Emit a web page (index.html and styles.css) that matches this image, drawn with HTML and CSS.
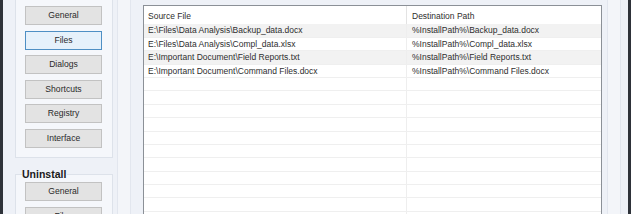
FILE: index.html
```html
<!DOCTYPE html>
<html>
<head>
<meta charset="utf-8">
<link rel="stylesheet" href="styles.css">
</head>
<body>
<div class="frame">
  <div class="edge"></div>
  <aside class="sidebar">
    <div class="group group-top">
      <button class="btn">General</button>
      <button class="btn btn-active">Files</button>
      <button class="btn">Dialogs</button>
      <button class="btn">Shortcuts</button>
      <button class="btn">Registry</button>
      <button class="btn">Interface</button>
    </div>
    <fieldset class="group group-uninstall">
      <legend class="group-title">Uninstall</legend>
      <div class="btns">
        <button class="btn">General</button>
        <button class="btn">Files</button>
      </div>
    </fieldset>
  </aside>
  <div class="gutter"></div>
  <main class="content">
    <div class="list">
      <div class="row head">
        <div class="cell c1">Source File</div>
        <div class="cell c2">Destination Path</div>
      </div>
      <div class="row alt">
        <div class="cell c1">E:\Files\Data Analysis\Backup_data.docx</div>
        <div class="cell c2">%InstallPath%\Backup_data.docx</div>
      </div>
      <div class="row">
        <div class="cell c1">E:\Files\Data Analysis\Compl_data.xlsx</div>
        <div class="cell c2">%InstallPath%\Compl_data.xlsx</div>
      </div>
      <div class="row alt">
        <div class="cell c1">E:\Important Document\Field Reports.txt</div>
        <div class="cell c2">%InstallPath%\Field Reports.txt</div>
      </div>
      <div class="row">
        <div class="cell c1">E:\Important Document\Command Files.docx</div>
        <div class="cell c2">%InstallPath%\Command Files.docx</div>
      </div>
      <div class="row empty"><div class="cell c1"></div><div class="cell c2"></div></div>
      <div class="row empty"><div class="cell c1"></div><div class="cell c2"></div></div>
      <div class="row empty"><div class="cell c1"></div><div class="cell c2"></div></div>
      <div class="row empty"><div class="cell c1"></div><div class="cell c2"></div></div>
      <div class="row empty"><div class="cell c1"></div><div class="cell c2"></div></div>
      <div class="row empty"><div class="cell c1"></div><div class="cell c2"></div></div>
      <div class="row empty"><div class="cell c1"></div><div class="cell c2"></div></div>
      <div class="row empty"><div class="cell c1"></div><div class="cell c2"></div></div>
      <div class="row empty"><div class="cell c1"></div><div class="cell c2"></div></div>
      <div class="row empty"><div class="cell c1"></div><div class="cell c2"></div></div>
      <div class="row empty"><div class="cell c1"></div><div class="cell c2"></div></div>
    </div>
  </main>
  <div class="rstrip"><div class="rstrip-inner"></div></div>
  <div class="edge"></div>
</div>
</body>
</html>
```

FILE: styles.css
```css
* { box-sizing: border-box; }
html, body {
  margin: 0;
  padding: 0;
  background: #eef1f7;
}
body {
  width: 631px;
  height: 214px;
  overflow: hidden;
  font-family: "Liberation Sans", Arial, sans-serif;
}
.frame {
  display: flex;
  height: 214px;
  overflow: hidden;
}
.edge {
  width: 3px;
  flex: none;
  background: #2e3239;
}
.sidebar {
  width: 115px;
  flex: none;
  border-right: 1px solid #e2e6ee;
  display: flex;
  flex-direction: column;
}
.group {
  width: 98px;
  margin-left: 12px;
  border: 1px solid #dde2ea;
  background: #f5f7fb;
}
.group-top {
  margin-top: -4px;
  padding: 9px 0 9.5px 9px;
  display: flex;
  flex-direction: column;
  gap: 5.5px;
}
.group-uninstall {
  margin-top: 10px;
  margin-right: 0;
  margin-bottom: 0;
  padding: 0;
  min-width: 0;
}
.group-title {
  margin-left: 6px;
  padding: 0 1px 0 0;
  font-weight: bold;
  font-size: 10.5px;
  line-height: 13px;
  color: #1a1a1a;
}
.btns {
  padding: 1px 0 0 9px;
  display: flex;
  flex-direction: column;
  gap: 5.5px;
}
.btn {
  width: 77px;
  height: 19px;
  flex: none;
  margin: 0;
  padding: 0;
  border: 1px solid #c2c2c2;
  background: #e3e3e3;
  font-family: "Liberation Sans", Arial, sans-serif;
  font-size: 8.6px;
  color: #2a2a2a;
  text-align: center;
  line-height: 17px;
}
.btn-active {
  border-color: #4f8fc4;
  background: #e6f1fb;
}
.gutter {
  width: 13px;
  flex: none;
  background: #f3f5f9;
  border-right: 1px solid #e2e6ee;
}
.content {
  width: 471px;
  flex: none;
  padding: 5px 0 0 12px;
}
.list {
  width: 459px;
  height: 230px;
  background: #fff;
  border: 1px solid #8b9097;
  border-bottom: none;
}
.row {
  display: flex;
  height: 13.4px;
  border-bottom: 1px solid #efefef;
}
.row.head {
  height: 18.4px;
  border-bottom: none;
}
.row.alt {
  background: #f2f2f2;
}
.cell {
  font-size: 8.5px;
  line-height: 13px;
  color: #2e2e2e;
  white-space: nowrap;
  overflow: hidden;
  padding-left: 4px;
}
.head .cell {
  padding-top: 1.5px;
  line-height: 17px;
}
.c1 {
  width: 263px;
  flex: none;
  border-right: 1px solid #eeeeee;
}
.head .c1 {
  border-right-color: #e3e3e3;
}
.c2 {
  flex: 1;
  padding-left: 5px;
}
.rstrip {
  width: 26px;
  flex: none;
  padding: 0 7px 0 5px;
}
.rstrip-inner {
  height: 100%;
  background: #f3f5f9;
  border-left: 1px solid #e2e6ee;
  border-right: 1px solid #e2e6ee;
}
```
